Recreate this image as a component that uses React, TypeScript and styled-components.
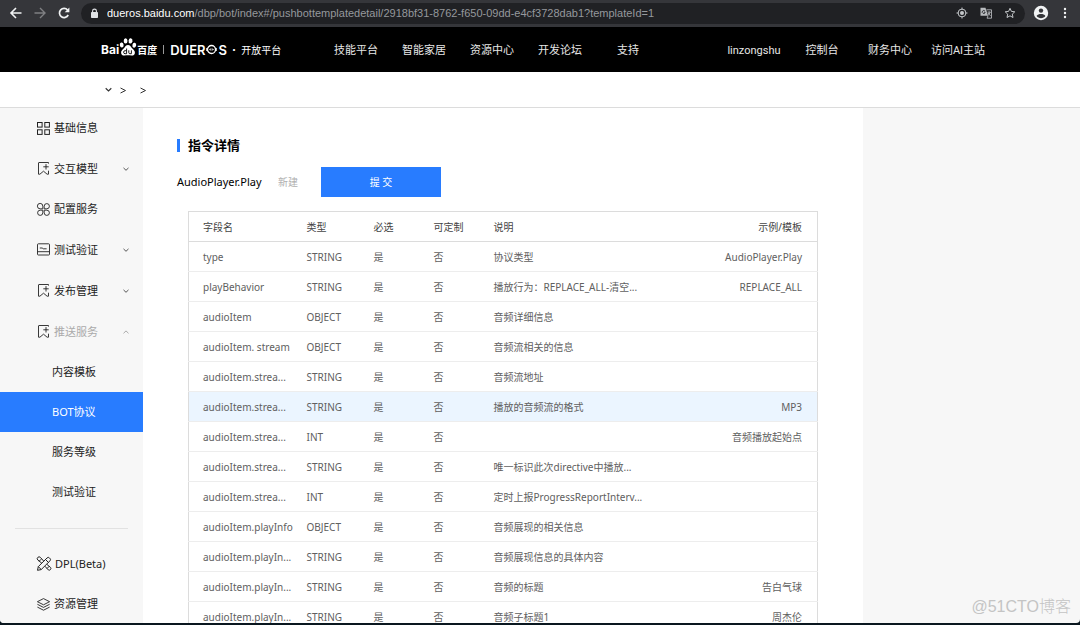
import React from "react";
import styled, { createGlobalStyle, css } from "styled-components";

const cjk = `"Noto Sans CJK SC", sans-serif`;

const GlobalStyle = createGlobalStyle`
  *, *::before, *::after { box-sizing: border-box; }
  body { margin: 0; background: #0a171f; font-family: "Noto Sans", ${cjk}; font-size: 11px; color: #333; }
  ul { list-style: none; margin: 0; padding: 0; }
  a { color: inherit; text-decoration: none; }
  button { font: inherit; border: 0; padding: 0; background: none; color: inherit; cursor: pointer; }
  svg { display: block; flex: none; }
`;

const Window = styled.div`
  position: relative;
  display: flex;
  flex-direction: column;
  height: calc(100vh - 2px);
  overflow: hidden;
  background: #f7f7f7;
  border-radius: 0 0 4px 4px;
`;

/* Browser toolbar */
const Toolbar = styled.div`
  display: flex;
  align-items: center;
  flex: none;
  height: 27px;
  padding: 0 9px 1px 9px;
  background: #35363a;
  color: #e8eaed;
`;
const NavButtons = styled.div`
  display: flex;
  gap: 10px;
  margin-right: 10px;
`;
const ToolButton = styled.button<{ $dim?: boolean }>`
  color: ${(p) => (p.$dim ? "#7f8083" : "#f1f3f4")};
`;
const AddressBar = styled.div`
  display: flex;
  align-items: center;
  flex: 1;
  min-width: 0;
  height: 21px;
  padding: 0 9px;
  gap: 8px;
  border-radius: 11px;
  background: #202124;
`;
const Url = styled.div`
  flex: 1;
  min-width: 0;
  overflow: hidden;
  white-space: nowrap;
  font-family: "Liberation Sans", sans-serif;
  font-size: 11px;
  line-height: 16px;
  color: #95989c;
`;
const Domain = styled.span`
  color: #fff;
`;
const AddressActions = styled.div`
  display: flex;
  gap: 12px;
  & > button { color: #c4c7ca; }
`;
const WindowActions = styled.div`
  display: flex;
  align-items: center;
  gap: 10px;
  margin-left: 8px;
`;

/* Site header */
const Header = styled.header`
  display: flex;
  align-items: center;
  flex: none;
  height: 45px;
  padding: 0 88px 0 101px;
  background: #000;
  color: #e6e6e6;
`;
const Brand = styled.a`
  display: flex;
  align-items: center;
  width: 221px;
  color: #fff;
  font-family: Inter, ${cjk};
  font-size: 12px;
  font-weight: 700;
  line-height: 16px;
  white-space: nowrap;
  & > svg { margin-bottom: 6px; }
`;
const BrandHan = styled.span`
  font-size: 10px;
`;
const Bar = styled.span`
  width: 1px;
  height: 9px;
  margin: 0 6px;
  background: #999;
`;
const ProductName = styled.span`
  display: flex;
  align-items: center;
  gap: 1px;
  font-size: 13px;
  font-weight: 600;
`;
const BrandSub = styled.span`
  margin-left: 2px;
  font-family: ${cjk};
  font-size: 10px;
  font-weight: 400;
`;
const HeaderNav = styled.nav<{ $end?: boolean }>`
  display: flex;
  ${(p) => p.$end && "margin-left: auto;"}
`;
const HeaderLink = styled.a`
  width: 68px;
  padding-top: 2px;
  text-align: center;
  font-family: Roboto, ${cjk};
  font-size: 11px;
  line-height: 16px;
  white-space: nowrap;
`;

const Breadcrumb = styled.nav`
  display: flex;
  align-items: center;
  flex: none;
  height: 36px;
  padding-left: 104px;
  background: #fff;
  border-bottom: 1px solid #dcdcdc;
  color: #333;
`;
const Crumb = styled.a`
  display: flex;
  align-items: center;
  gap: 6px;
  margin-right: 12px;
`;

/* Page body */
const Body = styled.div`
  display: flex;
  flex: 1;
  min-height: 0;
`;
const Sidebar = styled.aside`
  flex: none;
  width: 143px;
  overflow: hidden;
  background: #f7f7f7;
`;
const itemBase = css`
  display: flex;
  align-items: center;
  width: 100%;
  line-height: 16px;
  white-space: nowrap;
`;
const MenuItem = styled.a`
  ${itemBase}
  height: 40px;
  padding-left: 36px;
  gap: 3px;
  color: #222;
`;
const MenuToggle = styled.button<{ $open?: boolean }>`
  ${itemBase}
  height: 41px;
  padding: 0 13px 0 36px;
  gap: 3px;
  color: #222;
  & > span { color: ${(p) => (p.$open ? "#aaa" : "#222")}; }
  & > svg:last-child { margin-left: auto; color: ${(p) => (p.$open ? "#aaa" : "#555")}; }
`;
const SubItem = styled.a<{ $active?: boolean }>`
  ${itemBase}
  height: 40px;
  padding-left: 52px;
  background: ${(p) => (p.$active ? "#287cff" : "transparent")};
  color: ${(p) => (p.$active ? "#fff" : "#222")};
`;
const Divider = styled.hr`
  margin: 16px 15px 15px;
  border: 0;
  border-top: 1px solid #e2e2e2;
`;

const Content = styled.main`
  flex: 1;
  max-width: 720px;
  min-width: 0;
  padding: 26px 45px 0 34px;
  overflow: hidden;
  background: #fff;
`;
const Title = styled.h1`
  display: flex;
  align-items: center;
  gap: 8px;
  margin: 0;
  font-size: 13px;
  line-height: 22px;
  font-weight: 700;
  color: #000;
  &::before { content: ""; width: 3px; height: 13px; background: #287cff; }
`;
const ActionRow = styled.div`
  display: flex;
  align-items: center;
  margin: 11px 0 14px;
`;
const DirectiveName = styled.span`
  width: 101px;
  font-size: 11px;
  line-height: 16px;
  color: #000;
`;
const NewLink = styled.a`
  width: 43px;
  font-size: 10px;
  line-height: 16px;
  color: #b0b0b0;
`;
const SubmitButton = styled.button`
  width: 120px;
  height: 30px;
  padding-bottom: 2px;
  background: #287cff;
  color: #fff;
  font-size: 10px;
`;
const Table = styled.table`
  width: calc(100% - 11px);
  margin-left: 11px;
  table-layout: fixed;
  border-collapse: collapse;
  border: 1px solid #dcdcdc;
  font-size: 10px;
  line-height: 16px;
  color: #606060;
`;
const Row = styled.tr<{ $hover?: boolean }>`
  height: 30px;
  border-bottom: 1px solid #ededed;
  background: ${(p) => (p.$hover ? "#ebf5ff" : "#fff")};
`;
const HeadRow = styled.tr`
  height: 30px;
  border-bottom: 1px solid #dcdcdc;
  color: #444;
`;
const cell = css`
  padding: 0 0 0 14px;
  text-align: left;
  font-weight: 400;
  white-space: nowrap;
  &:last-child { padding: 0 15px 0 0; text-align: right; }
`;
const Th = styled.th`${cell}`;
const Td = styled.td`${cell}`;

const Watermark = styled.div`
  position: absolute;
  right: 9px;
  bottom: 4px;
  font-family: "Liberation Sans", ${cjk};
  font-size: 16px;
  line-height: 24px;
  font-weight: 300;
  color: #c4c4c4;
`;

/* Icons */
type IconProps = { size?: number; box?: string; width?: number; children: React.ReactNode };
const Icon = ({ size = 15, box = "0 0 15 15", width = 1, children }: IconProps) => (
  <svg width={size} height={size} viewBox={box} fill="none" stroke="currentColor" strokeWidth={width} aria-hidden="true">
    {children}
  </svg>
);
const GridIcon = () => (
  <Icon>
    <rect x="1.5" y="1.5" width="4.6" height="4.6" /><rect x="8.8" y="1.5" width="4.6" height="4.6" />
    <rect x="1.5" y="8.8" width="4.6" height="4.6" /><rect x="8.8" y="8.8" width="4.6" height="4.6" />
  </Icon>
);
const BookmarkIcon = () => (
  <Icon width={0.9}>
    <path d="M12.5 2.600V1.500H3a.5.5 0 0 0-.5.5v11.200h1.400l3.600-3 3.600 3h1.400V9.700M7.300 5.800h5.400M10 3.100v5.400" />
  </Icon>
);
const CloverIcon = () => (
  <Icon width={0.9}>
    <path d="M6.8 6.8H4.2A2.7 2.7 0 1 1 6.8 4.2ZM8.2 6.8V4.2a2.6 2.6 0 1 1 2.6 2.6ZM6.8 8.2v2.6a2.6 2.6 0 1 1-2.6-2.6ZM8.2 8.2h2.6a2.6 2.6 0 1 1-2.6 2.6Z" />
  </Icon>
);
const CardIcon = () => (
  <Icon width={0.9}>
    <rect x="1.5" y="1.8" width="12" height="11.2" rx=".8" /><path d="M3.8 6h2.4l1 .8h3.4M1.5 9.7h12" />
  </Icon>
);
const DesignIcon = () => (
  <Icon size={16} box="0 0 16 16">
    <path d="M1.5 14.3l.8-3.7L11 2a1.7 1.7 0 0 1 2.5 0l.4.4a1.7 1.7 0 0 1 0 2.5L5.2 13.6ZM9.5 3.5l3 3M2.3 10.6l3 3" />
    <path d="M5.8 7.2L1.8 4a1.8 1.8 0 0 1 2.6-2.6l3.3 3.7M8.9 10.2l3.4 3.7a1.7 1.7 0 0 0 2.3-2.4l-3.8-3.2M3.2 5.2l2-2M11 12.5l2.2-2.2" />
  </Icon>
);
const LayersIcon = () => (
  <Icon width={0.9}>
    <path d="M7.5 1.6l6.1 3.1-6.1 3.1-6.1-3.1ZM1.4 7.3l6.1 3.1 6.1-3.1M1.4 10.1l6.1 3.1 6.1-3.1" />
  </Icon>
);
const Chevron = ({ up, size = 8 }: { up?: boolean; size?: number }) => (
  <Icon size={size} box="0 0 8 8"><path d={up ? "M1.5 5.3 4 2.9l2.5 2.4" : "M1.5 2.9 4 5.3l2.5-2.4"} /></Icon>
);
const Greater = () => (
  <Icon size={8} box="0 0 8 8"><path d="M1.5 2 6.5 4.5l-5 2.5" /></Icon>
);
const PawLogo = () => (
  <svg width="18" height="20" viewBox="0 0 18 20" fill="#fff" aria-hidden="true">
    <ellipse cx="2.7" cy="8" rx="1.9" ry="2.5" transform="rotate(-12 2.7 8)" />
    <ellipse cx="6.6" cy="3.9" rx="1.9" ry="2.6" />
    <ellipse cx="11.5" cy="3.9" rx="1.9" ry="2.6" transform="rotate(10 11.5 3.9)" />
    <ellipse cx="15.3" cy="8.2" rx="1.9" ry="2.5" transform="rotate(12 15.3 8.2)" />
    <path d="M9 7.9c2 0 2.9 1.8 4.1 3.3 1.4 1.6 3.1 2.5 2.8 4.8-.3 2.2-2 2.7-3.5 2.5-2.2-.3-4.6-.3-6.8 0-1.5.2-3.2-.3-3.5-2.5-.3-2.3 1.4-3.2 2.8-4.8C6.1 9.7 7 7.9 9 7.9Z" />
    <path d="M7.6 11.5v5.2H6.1a1.4 1.4 0 0 1 0-3h1.5M9.8 13.3v2.3c0 .8.5 1.1 1.1 1.1h1.5v-3.4" fill="none" stroke="#000" strokeWidth=".9" />
  </svg>
);
const OrbLogo = () => (
  <svg width="11" height="11" viewBox="0 0 11 11" fill="none" stroke="#fff" strokeWidth="1.3" aria-hidden="true">
    <circle cx="5.5" cy="5.5" r="4" /><path d="M.9 4v3M10.1 4v3" />
    <path d="M3 5.5h1.8M6.2 5.5H8M4.8 4.2v2.6M6.2 4.2v2.6" strokeWidth=".6" />
  </svg>
);

const menu = [
  { label: "基础信息", icon: <GridIcon /> },
  { label: "交互模型", icon: <BookmarkIcon />, expandable: true },
  { label: "配置服务", icon: <CloverIcon /> },
  { label: "测试验证", icon: <CardIcon />, expandable: true },
  { label: "发布管理", icon: <BookmarkIcon />, expandable: true },
  { label: "推送服务", icon: <BookmarkIcon />, expandable: true, children: ["内容模板", "BOT协议", "服务等级", "测试验证"] },
];

const columns = [
  { label: "字段名", width: 104 },
  { label: "类型", width: 67 },
  { label: "必选", width: 60 },
  { label: "可定制", width: 60 },
  { label: "说明", width: 180 },
  { label: "示例/模板" },
];

const fields: [string, string, string, string][] = [
  ["type", "STRING", "协议类型", "AudioPlayer.Play"],
  ["playBehavior", "STRING", "播放行为：REPLACE_ALL-清空...", "REPLACE_ALL"],
  ["audioItem", "OBJECT", "音频详细信息", ""],
  ["audioItem. stream", "OBJECT", "音频流相关的信息", ""],
  ["audioItem.strea...", "STRING", "音频流地址", ""],
  ["audioItem.strea...", "STRING", "播放的音频流的格式", "MP3"],
  ["audioItem.strea...", "INT", "", "音频播放起始点"],
  ["audioItem.strea...", "STRING", "唯一标识此次directive中播放...", ""],
  ["audioItem.strea...", "INT", "定时上报ProgressReportInterv...", ""],
  ["audioItem.playInfo", "OBJECT", "音频展现的相关信息", ""],
  ["audioItem.playIn...", "STRING", "音频展现信息的具体内容", ""],
  ["audioItem.playIn...", "STRING", "音频的标题", "告白气球"],
  ["audioItem.playIn...", "STRING", "音频子标题1", "周杰伦"],
];

export default function App() {
  return (
    <Window>
      <GlobalStyle />
      <Toolbar>
        <NavButtons>
          <ToolButton aria-label="Back">
            <Icon size={14} box="0 0 14 14" width={1.6}><path d="M12.5 7H2.5M7 2 2 7l5 5" /></Icon>
          </ToolButton>
          <ToolButton aria-label="Forward" $dim>
            <Icon size={14} box="0 0 14 14" width={1.4}><path d="M1.5 7h10M7 2l5 5-5 5" /></Icon>
          </ToolButton>
          <ToolButton aria-label="Reload">
            <Icon size={14} box="0 0 14 14" width={1.7}>
              <path d="M11.2 9A4.6 4.6 0 1 1 10.6 4" /><path d="M12.4 1.5v4.7H7.7Z" fill="currentColor" stroke="none" />
            </Icon>
          </ToolButton>
        </NavButtons>
        <AddressBar>
          <svg width="9" height="11" viewBox="0 0 9 11" fill="#e0e2e5" aria-hidden="true">
            <rect x="1" y="4" width="7" height="6" rx=".8" />
            <path d="M2.6 4.5V3a1.9 1.9 0 0 1 3.8 0v1.5" fill="none" stroke="#e0e2e5" strokeWidth="1.1" />
          </svg>
          <Url><Domain>dueros.baidu.com</Domain>/dbp/bot/index#/pushbottemplatedetail/2918bf31-8762-f650-09dd-e4cf3728dab1?templateId=1</Url>
          <AddressActions>
            <ToolButton aria-label="Location">
              <Icon size={12} box="0 0 12 12"><circle cx="6" cy="6" r="3.9" /><circle cx="6" cy="6" r="2" fill="currentColor" stroke="none" /><path d="M6 .5v2M6 9.5v2M.5 6h2M9.5 6h2" /></Icon>
            </ToolButton>
            <ToolButton aria-label="Translate">
              <Icon size={12} box="0 0 12 12" width={0.8}>
                <path d="M.5.8h5l2.6 8H.5Z" fill="#b8bbbe" stroke="none" />
                <path d="M6.5 2.8h5v8.4H7l1-2.3M7.5 5.2h3.2M9.1 4.4v.8M10.2 5.2c-.4 1.5-1.2 2.4-2.2 3.1M8.2 6c.5 1.2 1.3 2 2.4 2.6" />
                <path d="M5 4.2A1.5 1.5 0 1 0 5.2 5.3H3.9" stroke="#202124" />
              </Icon>
            </ToolButton>
            <ToolButton aria-label="Bookmark">
              <Icon size={12} box="0 0 12 12"><path d="M6 1.3l1.4 3.1 3.4.4-2.5 2.3.7 3.4-3-1.7-3 1.7.7-3.4L1.2 4.8l3.4-.4Z" /></Icon>
            </ToolButton>
          </AddressActions>
        </AddressBar>
        <WindowActions>
          <ToolButton aria-label="Profile">
            <svg width="16" height="16" viewBox="0 0 16 16" aria-hidden="true">
              <circle cx="8" cy="8" r="7.2" fill="#f1f3f4" /><circle cx="8" cy="5.6" r="2.2" fill="#35363a" />
              <path d="M3.6 11c.8-1.5 2.5-2 4.4-2s3.6.5 4.4 2c-1 1.3-2.6 2.2-4.4 2.2S4.6 12.3 3.6 11Z" fill="#35363a" />
            </svg>
          </ToolButton>
          <ToolButton aria-label="Menu">
            <svg width="12" height="12" viewBox="0 0 12 12" fill="#f1f3f4" aria-hidden="true"><circle cx="6" cy="2" r="1.2" /><circle cx="6" cy="6" r="1.2" /><circle cx="6" cy="10" r="1.2" /></svg>
          </ToolButton>
        </WindowActions>
      </Toolbar>

      <Header>
        <Brand href="#">
          <span>Bai</span><PawLogo /><BrandHan>百度</BrandHan>
          <Bar />
          <ProductName><span>DUER</span><OrbLogo /><span>S</span></ProductName>
          <BrandSub>· 开放平台</BrandSub>
        </Brand>
        <HeaderNav>
          {["技能平台", "智能家居", "资源中心", "开发论坛", "支持"].map((t) => <HeaderLink href="#" key={t}>{t}</HeaderLink>)}
        </HeaderNav>
        <HeaderNav $end>
          {["linzongshu", "控制台", "财务中心", "访问AI主站"].map((t) => <HeaderLink href="#" key={t}>{t}</HeaderLink>)}
        </HeaderNav>
      </Header>

      <Breadcrumb aria-label="Breadcrumb">
        <Crumb href="#" aria-label="Section"><Chevron size={9} /><Greater /></Crumb>
        <Crumb href="#" aria-label="Page"><Greater /></Crumb>
      </Breadcrumb>

      <Body>
        <Sidebar>
          <ul>
            {menu.map((m) => (
              <li key={m.label}>
                {m.expandable ? (
                  <MenuToggle $open={!!m.children} aria-expanded={!!m.children}>
                    {m.icon}<span>{m.label}</span><Chevron up={!!m.children} />
                  </MenuToggle>
                ) : (
                  <MenuItem href="#">{m.icon}<span>{m.label}</span></MenuItem>
                )}
                {m.children && (
                  <ul>
                    {m.children.map((c) => (
                      <li key={c}><SubItem href="#" $active={c === "BOT协议"}>{c}</SubItem></li>
                    ))}
                  </ul>
                )}
              </li>
            ))}
          </ul>
          <Divider />
          <ul>
            <li><MenuItem href="#"><DesignIcon /><span>DPL(Beta)</span></MenuItem></li>
            <li><MenuItem href="#"><LayersIcon /><span>资源管理</span></MenuItem></li>
          </ul>
        </Sidebar>

        <Content>
          <Title>指令详情</Title>
          <ActionRow>
            <DirectiveName>AudioPlayer.Play</DirectiveName>
            <NewLink href="#">新建</NewLink>
            <SubmitButton type="button">提 交</SubmitButton>
          </ActionRow>
          <Table>
            <colgroup>
              {columns.map((c) => <col key={c.label} width={c.width} />)}
            </colgroup>
            <thead>
              <HeadRow>{columns.map((c) => <Th key={c.label}>{c.label}</Th>)}</HeadRow>
            </thead>
            <tbody>
              {fields.map(([name, type, note, sample], i) => (
                <Row key={i} $hover={sample === "MP3"}>
                  <Td>{name}</Td><Td>{type}</Td><Td>是</Td><Td>否</Td><Td>{note}</Td><Td>{sample}</Td>
                </Row>
              ))}
            </tbody>
          </Table>
        </Content>
      </Body>
      <Watermark>@51CTO博客</Watermark>
    </Window>
  );
}
